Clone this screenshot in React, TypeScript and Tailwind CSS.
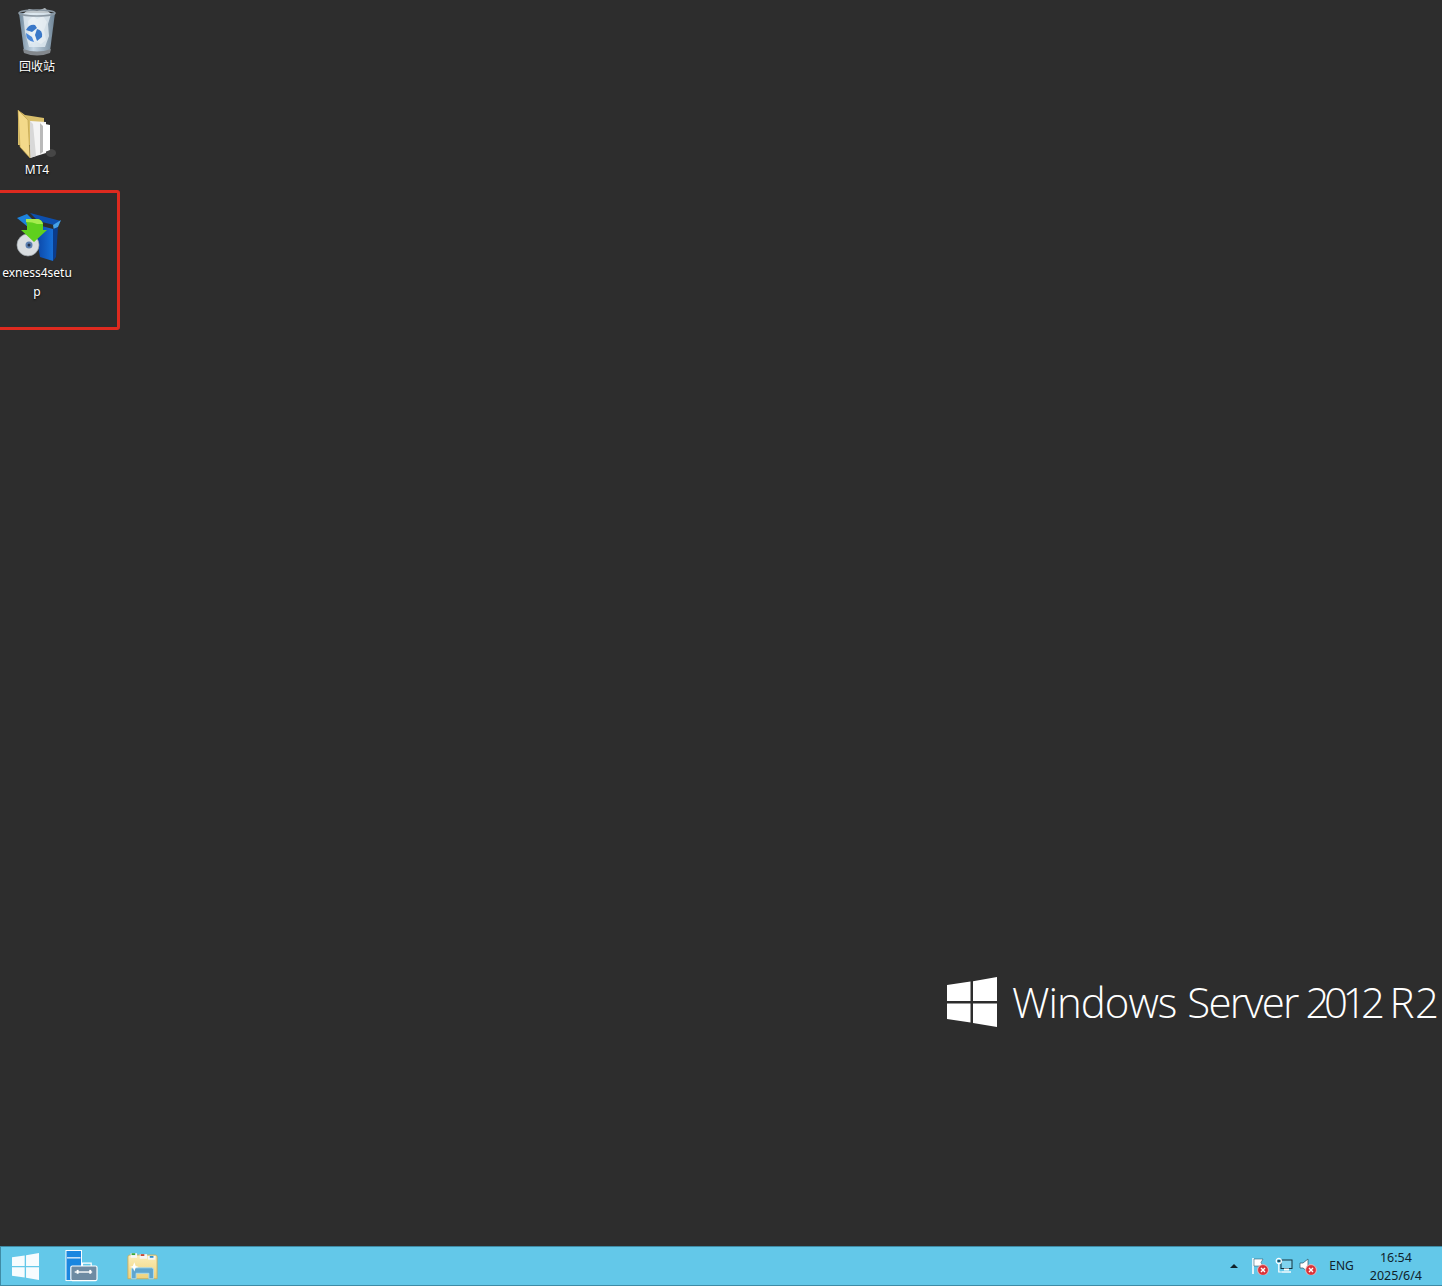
const LABEL = "text-white text-[12px] leading-[19px] text-center mt-[1px] [text-shadow:0_1px_2px_#000] [font-family:'Noto_Sans','Noto_Sans_CJK_SC',sans-serif]";
const LOGO_WORD = "text-white text-[42px] leading-[50px] font-light [font-family:'Open_Sans',sans-serif]";

function RecycleBin() {
  return (
    <svg width="40" height="48" viewBox="0 0 40 48">
      <defs>
        <linearGradient id="binBody" x1="0" y1="0" x2="1" y2="0">
          <stop offset="0" stopColor="#71899c" />
          <stop offset="0.4" stopColor="#c5d6e4" />
          <stop offset="1" stopColor="#6f8597" />
        </linearGradient>
      </defs>
      <path d="M2 5 L38 5 L33 43 Q20 47 7 43 Z" fill="url(#binBody)" />
      <path d="M6 6 L12 1 L20 3 L28 0 L34 6 L31 16 L32 28 L28 39 L12 39 L8 24 Z" fill="#e4edf4" opacity="0.8" />
      <path d="M11 13 L16 8 L20 11 L26 8 L30 14 L27 22 L29 32 L24 36 L18 33 L13 36 Z" fill="#ffffff" opacity="0.35" />
      <path d="M9 22 Q12 16 18 17 L20 20 L15 24 Z" fill="#3a78c8" />
      <path d="M20 21 Q26 22 25 29 L20 33 L18 27 Z" fill="#3a78c8" />
      <path d="M9 25 L15 29 L17 34 Q9 33 9 25 Z" fill="#4a88da" />
      <path d="M6 41 Q20 46 34 41 L33 45 Q20 50 7 45 Z" fill="#83888d" />
      <ellipse cx="20" cy="5" rx="18" ry="3" fill="none" stroke="#8b98a3" strokeWidth="1.6" />
    </svg>
  );
}

function FolderIcon() {
  return (
    <svg width="40" height="50" viewBox="0 0 40 50" className="-translate-x-[1px]">
      <ellipse cx="35" cy="44" rx="5" ry="4" fill="#ffffff" opacity="0.12" />
      <path d="M2 1 L9 6 L28 9 L28 36 L2 36 Z" fill="#d9bf6b" />
      <path d="M14 12 L30 13 L30 44 L14 49 Z" fill="#f4f4f4" />
      <path d="M24 14 L34 16 L34 41 L24 45 Z" fill="#ffffff" />
      <path d="M24 14 L27 17 L27 43 L24 45 Z" fill="#b9b9b9" />
      <path d="M14 12 L17 15 L20 47 L14 49 Z" fill="#d8d8d8" />
      <path d="M2 1 L12 11 L14 49 L4 38 Z" fill="#f3d98a" />
      <path d="M2 1 L12 11 L14 49 L4 38 Z" fill="none" stroke="#b89a45" strokeWidth="0.6" />
    </svg>
  );
}

function SetupIcon() {
  return (
    <svg width="46" height="50" viewBox="0 0 46 50" className="translate-x-[2px]">
      <defs>
        <linearGradient id="boxFront" x1="0" y1="0" x2="1" y2="0">
          <stop offset="0" stopColor="#0a3f9e" />
          <stop offset="1" stopColor="#1670d8" />
        </linearGradient>
      </defs>
      <path d="M1 6 L11 2 L21 12 L12 15 Z" fill="#1d82dc" />
      <path d="M14 1 L45 9 L38 13 L22 9 Z" fill="#0d4fae" />
      <path d="M37 13 L45 8 L42 15 L38 19 Z" fill="#45a2e8" />
      <path d="M18 12 L37 17 L37 49 L24 45 Z" fill="url(#boxFront)" />
      <path d="M37 17 L42 15 L40 45 L37 49 Z" fill="#0b3c8c" />
      <circle cx="12" cy="33" r="11" fill="#d9dde0" />
      <circle cx="12" cy="33" r="11" fill="none" stroke="#9ba3a9" strokeWidth="0.7" />
      <circle cx="13" cy="33" r="3.5" fill="#5b7fb0" />
      <circle cx="13" cy="33" r="1.5" fill="#23324c" />
      <path d="M10 7 L22 7 Q26 8 27 12 L27 18 L31 18 L18 30 L5 18 L11 18 L11 14 Q11 11 10 10 Z" fill="#5fd01e" />
      <path d="M10 7 L22 7 Q26 8 27 12 L21 12 Q17 10 10 10 Z" fill="#a5ec4e" />
    </svg>
  );
}

function DesktopIcon({ label, children, className }: { label: string; children: React.ReactNode; className: string }) {
  return (
    <div className={`w-[74px] flex flex-col items-center ${className}`}>
      <div className="h-[50px] flex items-end justify-center">{children}</div>
      <div className={`${LABEL} w-[74px] break-all`}>{label}</div>
    </div>
  );
}

function WinLogo({ size, color }: { size: number; color: string }) {
  return (
    <svg width={size} height={size} viewBox="0 0 50 50">
      <path d="M0 8 L23.5 4.6 L23.5 24 L0 24 Z M26 4.2 L50 0 L50 24 L26 24 Z M0 26.5 L23.5 26.5 L23.5 45.6 L0 42 Z M26 26.5 L50 26.5 L50 50 L26 46 Z" fill={color} />
    </svg>
  );
}

function ServerManagerIcon() {
  return (
    <svg width="33" height="34" viewBox="0 0 34 34">
      <rect x="1" y="1" width="16" height="31" fill="#1a86e0" stroke="#fff" strokeWidth="1" />
      <rect x="2" y="8" width="14" height="1.2" fill="#fff" />
      <path d="M18 17 V14 H27 V17" fill="none" stroke="#fff" strokeWidth="1.2" />
      <rect x="6" y="17" width="27" height="15" rx="1.5" fill="#6e8ba3" stroke="#fff" strokeWidth="1.2" />
      <rect x="10" y="22.5" width="18" height="1.4" fill="#fff" />
      <rect x="12" y="21" width="2" height="4" fill="#fff" />
      <rect x="25" y="21" width="2" height="4" fill="#fff" />
    </svg>
  );
}

function ExplorerIcon() {
  return (
    <svg width="31" height="30" viewBox="0 0 34 32">
      <defs>
        <linearGradient id="explorerFolder" x1="0" y1="0" x2="0" y2="1">
          <stop offset="0" stopColor="#fbeeb9" />
          <stop offset="1" stopColor="#efd27c" />
        </linearGradient>
      </defs>
      <path d="M1 6 Q1 4 3 4 H31 Q33 4 33 6 V30 H1 Z" fill="url(#explorerFolder)" stroke="#c9ae5e" strokeWidth="1" />
      <rect x="4" y="2" width="7" height="5" fill="#f7f7f7" />
      <rect x="5" y="2" width="4" height="2" fill="#39a83a" />
      <rect x="14" y="3" width="8" height="5" fill="#f7f7f7" />
      <rect x="15" y="3" width="4" height="2" fill="#c9452f" />
      <rect x="23" y="5" width="8" height="4" fill="#f7f7f7" />
      <rect x="25" y="5" width="4" height="2" fill="#2f90c9" />
      <path d="M5 30 V20 Q5 18 7 18 H27 Q29 18 29 20 V30 H24 V24 H10 V30 Z" fill="#5fa6cf" stroke="#a7dcf2" strokeWidth="1" />
      <path d="M8 12 L9.5 16 L13 17 L9.5 18 L8 22 L6.5 18 L3 17 L6.5 16 Z" fill="#fff" />
    </svg>
  );
}

function RedX() {
  return (
    <g>
      <circle cx="12" cy="12" r="5.4" fill="#d9343a" stroke="#f3c9c9" strokeWidth="0.8" />
      <path d="M10 10 L14 14 M14 10 L10 14" stroke="#fff" strokeWidth="1.4" />
    </g>
  );
}

function FlagIcon() {
  return (
    <svg width="18" height="18" viewBox="0 0 18 18">
      <g transform="translate(0 1)">
        <path d="M2 0 V16" stroke="#fff" strokeWidth="1.6" />
        <path d="M3 1 H12 L10 4.5 L12 8 H3 Z" fill="#fff" stroke="#234b5e" strokeWidth="0.5" />
        <RedX />
      </g>
    </svg>
  );
}

function NetworkIcon() {
  return (
    <svg width="18" height="18" viewBox="0 0 18 18" fill="none">
      <rect x="6" y="3" width="11" height="8.5" stroke="#15323f" strokeWidth="1" fill="#7fd3ee" />
      <rect x="9" y="11.5" width="5" height="2" fill="#fff" />
      <path d="M7 15 H16" stroke="#fff" strokeWidth="1.4" />
      <circle cx="3.8" cy="4" r="2.6" stroke="#fff" strokeWidth="1.2" />
      <rect x="2.5" y="3.2" width="2.6" height="1.6" fill="#15323f" />
      <path d="M3.8 6.5 V15 H7" stroke="#fff" strokeWidth="1.2" />
    </svg>
  );
}

function SpeakerIcon() {
  return (
    <svg width="18" height="18" viewBox="0 0 18 18">
      <g transform="translate(0 1)">
        <path d="M1 5 H4 L9 1 V14 L4 10 H1 Z" fill="#fff" stroke="#2a5566" strokeWidth="0.7" />
        <RedX />
      </g>
    </svg>
  );
}

export default function App() {
  return (
    <div className="w-[1442px] h-[1286px] flex flex-col overflow-hidden bg-[#2d2d2d]">
      {/* desktop */}
      <div className="relative flex-1 flex flex-col">
        <DesktopIcon label="回收站" className="mt-[6px]">
          <RecycleBin />
        </DesktopIcon>
        <DesktopIcon label="MT4" className="mt-[33px]">
          <FolderIcon />
        </DesktopIcon>
        <DesktopIcon label="exness4setup" className="mt-[33px]">
          <SetupIcon />
        </DesktopIcon>

        {/* red marker drawn over the screenshot */}
        <div className="absolute left-[-8px] top-[190px] w-[128px] h-[140px] border-[3px] border-[#dd2a1f] rounded-[3px]" />

        {/* wallpaper logo */}
        <div className="absolute left-[947px] top-[977px] flex items-center">
          <WinLogo size={50} color="#ffffff" />
          <div className="ml-[15px] flex whitespace-nowrap">
            <span className={`${LOGO_WORD} tracking-[-1px]`}>Windows</span>
            <span className={`${LOGO_WORD} ml-[11px] tracking-[-1.8px]`}>Server</span>
            <span className={`${LOGO_WORD} ml-[8px] tracking-[-5.5px]`}>2012</span>
            <span className={`${LOGO_WORD} ml-[10px] tracking-[0.5px]`}>R2</span>
          </div>
        </div>
      </div>

      {/* taskbar */}
      <div className="h-[40px] shrink-0 flex items-center bg-[#63c8e9] border-t border-l border-b border-[#3f8ba5] text-[#10222b] [font-family:'Noto_Sans','Noto_Sans_CJK_SC',sans-serif]">
        <div className="ml-[11px] flex items-center">
          <WinLogo size={27} color="#f6fcfe" />
        </div>
        <div className="ml-[26px] flex items-center">
          <ServerManagerIcon />
        </div>
        <div className="ml-[29px] flex items-center">
          <ExplorerIcon />
        </div>

        <div className="ml-auto flex items-center">
          <div className="w-0 h-0 border-x-[4px] border-x-transparent border-b-[4px] border-b-[#10222b]" />
          <div className="ml-[13px] flex items-center gap-[6px]">
            <FlagIcon />
            <NetworkIcon />
            <SpeakerIcon />
          </div>
          <span className="ml-[12px] text-[12px]">ENG</span>
          <div className="ml-[16px] mr-[20px] flex flex-col items-center text-[12.5px] leading-[18px] translate-y-[1px]">
            <span>16:54</span>
            <span>2025/6/4</span>
          </div>
        </div>
      </div>
    </div>
  );
}
